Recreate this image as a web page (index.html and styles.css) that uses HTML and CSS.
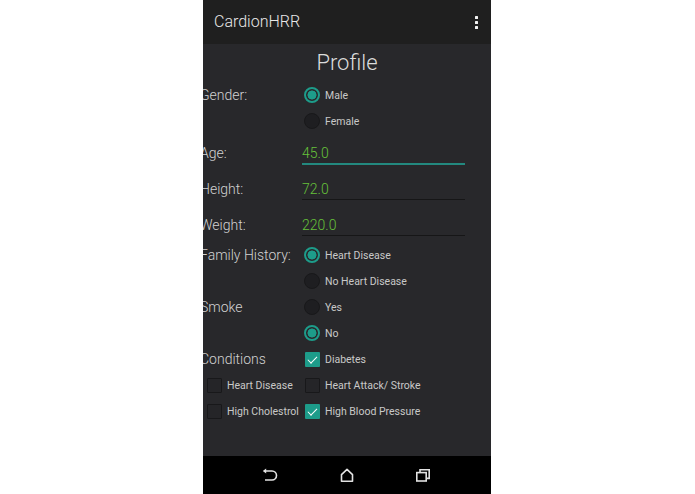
FILE: index.html
```html
<!DOCTYPE html>
<html>
<head>
<meta charset="utf-8">
<link rel="stylesheet" href="styles.css">
</head>
<body>
<div class="stage">
  <div class="phone">
    <header class="appbar">
      <span class="app-title">CardionHRR</span>
      <span class="menu"><i></i><i></i><i></i></span>
    </header>
    <main class="content">
      <h1 class="title">Profile</h1>

      <div class="row radio-row">
        <div class="label">Gender:</div>
        <div class="options">
          <div class="opt"><span class="radio on"></span><span class="opt-text">Male</span></div>
          <div class="opt"><span class="radio"></span><span class="opt-text">Female</span></div>
        </div>
      </div>

      <div class="row field-row">
        <div class="label">Age:</div>
        <div class="input focused">45.0</div>
      </div>
      <div class="row field-row">
        <div class="label">Height:</div>
        <div class="input">72.0</div>
      </div>
      <div class="row field-row">
        <div class="label">Weight:</div>
        <div class="input">220.0</div>
      </div>

      <div class="row radio-row">
        <div class="label">Family History:</div>
        <div class="options">
          <div class="opt"><span class="radio on"></span><span class="opt-text">Heart Disease</span></div>
          <div class="opt"><span class="radio"></span><span class="opt-text">No Heart Disease</span></div>
        </div>
      </div>

      <div class="row radio-row">
        <div class="label">Smoke</div>
        <div class="options">
          <div class="opt"><span class="radio"></span><span class="opt-text">Yes</span></div>
          <div class="opt"><span class="radio on"></span><span class="opt-text">No</span></div>
        </div>
      </div>

      <div class="row radio-row">
        <div class="label">Conditions</div>
        <div class="options">
          <div class="opt check-right"><span class="check on"></span><span class="opt-text">Diabetes</span></div>
        </div>
      </div>

      <div class="row check-grid">
        <div class="opt check-left"><span class="check"></span><span class="opt-text">Heart Disease</span></div>
        <div class="opt check-right"><span class="check"></span><span class="opt-text">Heart Attack/ Stroke</span></div>
        <div class="opt check-left"><span class="check"></span><span class="opt-text">High Cholestrol</span></div>
        <div class="opt check-right"><span class="check on"></span><span class="opt-text">High Blood Pressure</span></div>
      </div>
    </main>
    <nav class="navbar">
      <svg class="nav-icon" width="24" height="24" viewBox="0 0 24 24">
        <path d="M7.5 8 H14 A4.5 4.5 0 0 1 14 17 H7" fill="none" stroke="#e2e2e2" stroke-width="1.6"/>
        <path d="M4.8 8 L8.2 5.4 L8.2 10.6 Z" fill="#e2e2e2"/>
      </svg>
      <svg class="nav-icon" width="24" height="24" viewBox="0 0 24 24">
        <path d="M6.5 18.3 V11.6 L12 6.3 L17.5 11.6 V18.3 Z" fill="none" stroke="#e2e2e2" stroke-width="1.6" stroke-linejoin="round"/>
      </svg>
      <svg class="nav-icon" width="24" height="24" viewBox="0 0 24 24">
        <rect x="5.8" y="9.6" width="9.4" height="8.4" fill="none" stroke="#e2e2e2" stroke-width="1.6"/>
        <path d="M9 9.6 V6.8 H18.2 V15.4 H15.2" fill="none" stroke="#e2e2e2" stroke-width="1.6"/>
      </svg>
    </nav>
  </div>
</div>
</body>
</html>
```

FILE: styles.css
```css
html, body {
  margin: 0;
  padding: 0;
  background: #ffffff;
}

.stage {
  padding-left: 203px;
  height: 494px;
}

.phone {
  width: 288px;
  height: 494px;
  background: #28282b;
  display: flex;
  flex-direction: column;
  overflow: hidden;
  font-family: Roboto, "Liberation Sans", sans-serif;
  color: #d4d4d4;
}

.appbar {
  height: 44px;
  flex: 0 0 44px;
  background: #1f1f1f;
  display: flex;
  align-items: center;
  justify-content: space-between;
  padding: 0 13px 0 11px;
}

.app-title {
  font-size: 16px;
  font-weight: 300;
  line-height: 44px;
  color: #e8e8e8;
}

.menu {
  display: flex;
  flex-direction: column;
  gap: 2px;
  width: 3px;
}

.menu i {
  display: block;
  width: 3px;
  height: 3px;
  background: #f2f2f2;
  border-radius: 0.5px;
}

.content {
  flex: 1;
}

.title {
  margin: 0;
  height: 38px;
  line-height: 38px;
  text-align: center;
  font-size: 22px;
  font-weight: 300;
  color: #dcdcdc;
}

.row {
  display: grid;
  grid-template-columns: 101px 1fr;
}

.label {
  margin-left: -3px;
  font-size: 14px;
  font-weight: 300;
  color: #d2d2d2;
  white-space: nowrap;
}

.radio-row .label {
  line-height: 26px;
}

.opt {
  height: 26px;
  display: flex;
  align-items: center;
}

.opt-text {
  font-size: 10.5px;
  line-height: 13px;
  color: #c8c8c8;
  white-space: nowrap;
}

.radio {
  box-sizing: border-box;
  width: 16px;
  height: 16px;
  border-radius: 50%;
  margin-right: 5px;
  background: #1e1e21;
  border: 1.5px solid #18181a;
  flex: 0 0 auto;
}

.radio.on {
  border: 2px solid #1d9c8a;
  background: radial-gradient(circle, #1d9c8a 0 4.2px, #28282b 4.8px);
}

.field-row {
  height: 36px;
}

.field-row .label {
  padding-top: 11px;
  line-height: 16px;
}

.input {
  margin-top: 11px;
  margin-left: -2px;
  width: 163px;
  height: 16px;
  line-height: 16px;
  padding-bottom: 2px;
  border-bottom: 1px solid #161617;
  font-size: 14px;
  font-weight: 300;
  color: #66c13a;
}

.input.focused {
  border-bottom: 2px solid #23897f;
}

.check {
  box-sizing: border-box;
  position: relative;
  width: 15px;
  height: 15px;
  margin-right: 5px;
  border: 1.5px solid #18181a;
  border-radius: 1px;
  background: #252528;
  flex: 0 0 auto;
}

.check.on {
  border: none;
  background: #1d9c8a;
}

.check.on::after {
  content: "";
  position: absolute;
  left: 5px;
  top: 2px;
  width: 3.5px;
  height: 8px;
  border-right: 1.6px solid #ffffff;
  border-bottom: 1.6px solid #ffffff;
  transform: rotate(45deg);
}

.check-left {
  padding-left: 4px;
}

.check-right {
  padding-left: 1px;
}

.navbar {
  height: 38px;
  flex: 0 0 38px;
  background: #000000;
  display: flex;
  align-items: center;
  padding-left: 55px;
  gap: 52.5px;
}

.nav-icon {
  display: block;
}
```
